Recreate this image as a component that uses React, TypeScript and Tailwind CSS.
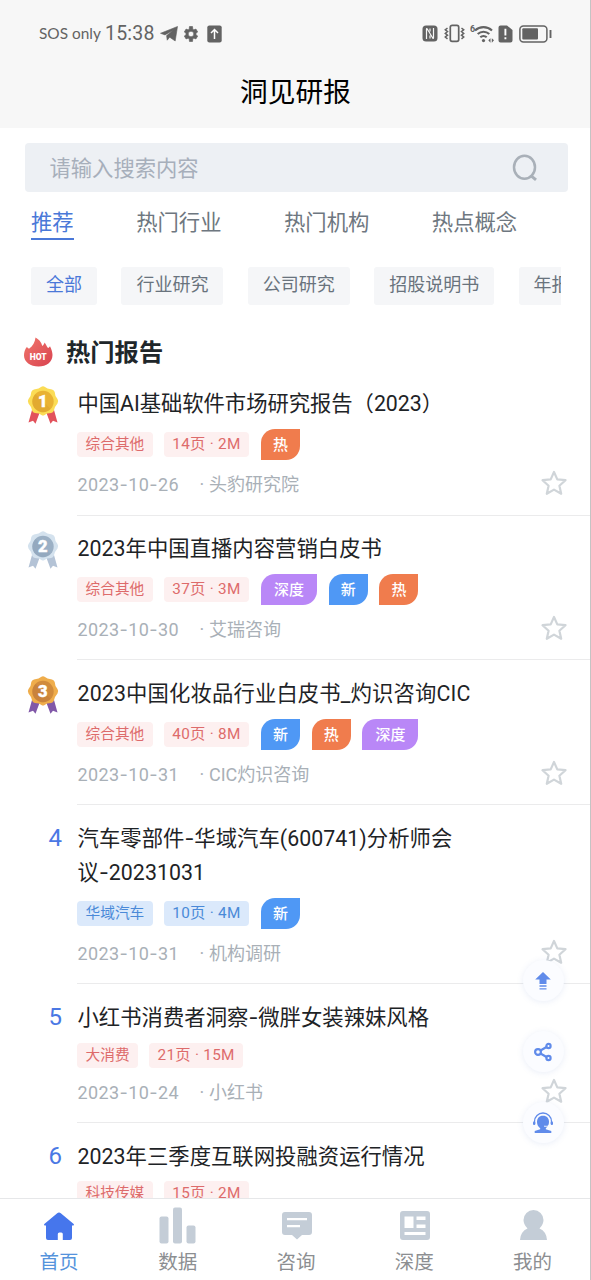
import React from "react";

type Tone = "red" | "blue";
type Leaf = "热" | "新" | "深度";
type Report = {
  title: string[];
  tracking: string;
  tags: [string, string];
  tone: Tone;
  leaves: Leaf[];
  date: string;
  source: string;
};

const reports: Report[] = [
  { title: ["中国AI基础软件市场研究报告（2023）"], tracking: "tracking-[-0.04px]", tags: ["综合其他", "14页 · 2M"], tone: "red", leaves: ["热"], date: "2023-10-26", source: "头豹研究院" },
  { title: ["2023年中国直播内容营销白皮书"], tracking: "tracking-[0.03px]", tags: ["综合其他", "37页 · 3M"], tone: "red", leaves: ["深度", "新", "热"], date: "2023-10-30", source: "艾瑞咨询" },
  { title: ["2023中国化妆品行业白皮书_灼识咨询CIC"], tracking: "tracking-[0.15px]", tags: ["综合其他", "40页 · 8M"], tone: "red", leaves: ["新", "热", "深度"], date: "2023-10-31", source: "CIC灼识咨询" },
  { title: ["汽车零部件-华域汽车(600741)分析师会", "议-20231031"], tracking: "tracking-[0.05px]", tags: ["华域汽车", "10页 · 4M"], tone: "blue", leaves: ["新"], date: "2023-10-31", source: "机构调研" },
  { title: ["小红书消费者洞察-微胖女装辣妹风格"], tracking: "tracking-[0.03px]", tags: ["大消费", "21页 · 15M"], tone: "red", leaves: [], date: "2023-10-24", source: "小红书" },
  { title: ["2023年三季度互联网投融资运行情况"], tracking: "tracking-[0.03px]", tags: ["科技传媒", "15页 · 2M"], tone: "red", leaves: [], date: "2023-10-24", source: "投中研究院" },
];

const leafStyle: Record<Leaf, string> = {
  热: "w-[39px] bg-[#f07c4d]",
  新: "w-[39px] bg-[#4f98f5]",
  深度: "w-[56px] bg-[#b987f7]",
};

/* Hyphens take a wider glyph than the digits' own font has. */
function Dashed({ text }: { text: string }) {
  const parts = text.split("-");
  return (
    <>
      {parts.map((p, i) => (
        <React.Fragment key={i}>
          {i > 0 && <span className="font-['Inter'] leading-none">-</span>}
          {p}
        </React.Fragment>
      ))}
    </>
  );
}

function StatusBar() {
  return (
    <div className="flex h-[67px] items-center justify-between pl-[39px] pr-[37px] text-[#636363]">
      <div className="flex items-center">
        <span className="w-[66px] whitespace-nowrap font-['Lato'] text-[15.400px]">SOS only</span>
        <span className="w-[55px] whitespace-nowrap text-[19.500px] tracking-[0.200px]">15:38</span>
        <svg width="18" height="16" viewBox="0 0 18 16" className="block">
          <path d="M0.500 7.300 17.500.5 15.200 15 9.700 11.200 7.200 14.200 6.600 9.600 13.200 4.200 5 8.900Z" fill="currentColor" stroke="currentColor" strokeWidth="0.600" />
        </svg>
        <svg width="16" height="16" viewBox="0 0 24 24" className="ml-[5px]" fill="currentColor">
          <path fillRule="evenodd" d="M19.400 13a7.800 7.800 0 0 0 0-2l2.600-2-2.600-4.400-3 1.200a8 8 0 0 0-1.700-1L14.300.8H9.700L9.300 4.800a8 8 0 0 0-1.700 1l-3-1.200L2 9l2.600 2a7.800 7.800 0 0 0 0 2L2 15l2.600 4.400 3-1.200a8 8 0 0 0 1.700 1l.4 4h4.600l.4-4a8 8 0 0 0 1.700-1l3 1.200L22 15ZM12 16.200a4.200 4.200 0 1 1 0-8.400 4.200 4.200 0 0 1 0 8.400Z" stroke="currentColor" strokeWidth="1" />
        </svg>
        <svg width="15" height="18" viewBox="0 0 15 18" className="ml-2">
          <rect x="0.300" y="0.500" width="14.400" height="17" rx="2" fill="currentColor" />
          <path d="M7.500 14V4.500M4 8l3.500-3.500L11 8" fill="none" stroke="#fff" strokeWidth="1.500" />
        </svg>
      </div>
      <div className="flex items-center">
        <svg width="16" height="17" viewBox="0 0 16 17" className="block">
          <rect x="0.500" y="0.500" width="15" height="16" rx="3.500" fill="currentColor" />
          <path d="M4.500 14V4.200q0-1 .8-.2l5.400 9q.8.800.8-.2V3M8 6.500V3.500M8 10.500v3" fill="none" stroke="#f7f7f7" strokeWidth="1.200" />
        </svg>
        <svg width="21" height="19" viewBox="0 0 21 19" className="ml-[6px]" fill="none" stroke="currentColor">
          <rect x="6.300" y="1.300" width="8.400" height="16" rx="1.800" strokeWidth="1.700" />
          <path d="M3.500 4 1.300 5.800 3.500 7.600 1.300 9.400 3.500 11.200 1.300 13 3.500 14.800M17.500 4l2.200 1.800-2.200 1.800 2.200 1.800-2.200 1.800 2.200 1.800-2.200 1.800" strokeWidth="1.500" />
        </svg>
        <svg width="24" height="20" viewBox="0 0 24 20" className="ml-[5px]">
          <text x="0" y="8" fontSize="9" fontWeight="700" fill="currentColor">6</text>
          <g fill="none" stroke="currentColor" strokeWidth="2.100">
            <path d="M5 6.500a12.500 12.500 0 0 1 17 0" />
            <path d="M7.700 10a8.500 8.500 0 0 1 11.600 0" />
            <path d="M10.300 13.300a4.700 4.700 0 0 1 6.400 0" />
          </g>
          <circle cx="13.500" cy="16.600" r="1.600" fill="currentColor" />
          <path d="M18.300 16.300l2.200-2v4.500zM24 16.300l-2.200-2v4.500z" fill="currentColor" />
        </svg>
        <svg width="15" height="18" viewBox="0 0 15 18" className="ml-[4px]">
          <path d="M2.500.5H9l5.500 4.500v10.500a2 2 0 0 1-2 2h-10a2 2 0 0 1-2-2v-13a2 2 0 0 1 2-2Z" fill="currentColor" />
          <path d="M7.400 3.800v6.700M7.400 12.300v2" stroke="#fff" strokeWidth="1.900" />
        </svg>
        <svg width="34" height="18" viewBox="0 0 34 18" className="ml-[6px]">
          <rect x="0.900" y="0.900" width="27" height="16" rx="3.500" fill="none" stroke="currentColor" strokeWidth="1.500" />
          <rect x="3.300" y="3.300" width="15.700" height="11.200" rx="1" fill="currentColor" />
          <path d="M31.500 5v8" stroke="currentColor" strokeWidth="1.900" />
        </svg>
      </div>
    </div>
  );
}

const medalColors = [
  { ribbon: "#e2525c", rim: "#fbdc55", face: "#e9b233", inner: "#d99f2c" },
  { ribbon: "#b4c3d6", rim: "#d4e2ee", face: "#9bb0c5", inner: "#8ba1b8" },
  { ribbon: "#8158a8", rim: "#efad4b", face: "#d18b3c", inner: "#bf7a3c" },
];

function Medal({ rank }: { rank: number }) {
  const c = medalColors[rank - 1];
  return (
    <svg width="34" height="40" viewBox="0 0 34 40" className="block">
      <path d="M6 25 2.500 37.500l4.500-1.800 2.500 3L13.500 28ZM28 25l3.500 12.500-4.500-1.800-2.500 3L20.500 28Z" fill={c.ribbon} />
      <path d="M17 1.200q1 0 2 .7l2.500 1.600 4.500 1q2.200.5 2.700 2.600l.8 4 2 3q1.400 2.200 0 4.400l-2.500 3.600-1.200 3.600q-.6 2-2.700 2.400l-4 .4-2.500 1.400q-1.600 1-3.200 0L12.900 28.500l-4-.4q-2.100-.4-2.700-2.400L5 22.100 2.500 18.500q-1.400-2.200 0-4.400l2-3 .8-4q.5-2.100 2.700-2.600l4.500-1L15 1.900q1-.7 2-.7Z" fill={c.rim} />
      <circle cx="17" cy="16.500" r="10.700" fill={c.face} />
      <path d="M9.500 9a10.700 10.700 0 1 0 15.200 15.100Z" fill={c.inner} opacity="0.450" />
      <text x="16.700" y="22" textAnchor="middle" fontFamily="Roboto" fontSize="16.500" fontWeight="900" fill="#fff" stroke="#fff" strokeWidth="0.400">{rank}</text>
    </svg>
  );
}

function Star() {
  return (
    <svg width="28" height="28" viewBox="0 0 28 28" fill="none" stroke="#d0d5d9" strokeWidth="2.200" strokeLinejoin="round" className="mb-[2.500px]">
      <path d="m14 3 3.300 7.400 8.200.8-6.100 5.500 1.800 8.100-7.200-4.200-7.200 4.200 1.800-8.100-6.100-5.500 8.200-.8Z" />
    </svg>
  );
}

function ReportRow({ report, rank }: { report: Report; rank: number }) {
  const tone = report.tone === "red" ? "bg-[#fdf0f0] text-[#dd6b6b]" : "bg-[#dbe9fb] text-[#4a89d8]";
  const dateGap = report.leaves.length > 0 ? "mt-[10.500px]" : "mt-[10px]";
  return (
    <article className="flex">
      <div className="w-[77px] shrink-0">
        {rank <= 3 ? (
          <div className="pl-[25.500px] pt-[14.500px]"><Medal rank={rank} /></div>
        ) : (
          <div className="pr-[15px] pt-[16px] text-right text-[24px] leading-[34px] text-[#4a78e4]">{rank}</div>
        )}
      </div>
      <div className="min-w-0 grow border-b border-[#ebebec] pb-[16px] pt-[16.500px]">
        <h3 className={`${report.tracking} pl-[0.500px] text-[21.330px] leading-[34.300px] text-[#1e2326]`}>
          {report.title.map((line) => (
            <span key={line} className="block whitespace-nowrap"><Dashed text={line} /></span>
          ))}
        </h3>
        <div className="mt-[7.500px] flex items-center whitespace-nowrap">
          <span className={`${tone} mr-[11px] h-[25.500px] rounded-[4px] px-[8.500px] text-[14.700px] leading-[25.500px]`}>{report.tags[0]}</span>
          <span className={`${tone} mr-[12px] h-[25.500px] rounded-[4px] px-[8.500px] text-[15.300px] leading-[25.500px] tracking-[0.280px]`}>{report.tags[1]}</span>
          {report.leaves.map((leaf) => (
            <span key={leaf} className={`${leafStyle[leaf]} mr-[11.700px] h-[31px] rounded-br-[14px] rounded-tl-[14px] text-center text-[15px] font-medium leading-[33px] text-white`}>{leaf}</span>
          ))}
        </div>
        <div className={`${dateGap} flex h-7 items-center justify-between pr-[22.500px]`}>
          <p className="flex whitespace-nowrap pl-[0.500px] text-[18px] text-[#a9b0b7]">
            <span className="w-[122px] tracking-[0.400px]"><Dashed text={report.date} /></span>
            <span className="w-[9.500px]">·</span>
            <span>{report.source}</span>
          </p>
          <Star />
        </div>
      </div>
    </article>
  );
}

function FloatButton({ children }: { children: React.ReactNode }) {
  return (
    <button className="flex size-[41px] items-center justify-center rounded-full bg-[#fbfcff] text-[#608bea] shadow-[0_1px_6px_rgba(90,125,200,0.13)]">
      {children}
    </button>
  );
}

const navItems = [
  { label: "首页", icon: <path d="M18 4.500q1 0 1.800.7L32.700 16q.8 1-.4 1.500H31V30q0 2-2 2h-7.200v-6q0-1.500-1.500-1.500h-2q-1.500 0-1.500 1.500v6H7q-2 0-2-2V17.500H3.700q-1.200-.5-.4-1.500L16.200 5.200q.8-.7 1.800-.7Z" /> },
  { label: "数据", icon: <><rect x="0.500" y="8.500" width="9" height="27" rx="2" /><rect x="14" y="-0.500" width="9" height="36" rx="2" /><rect x="27.500" y="17.500" width="9" height="18" rx="2" /></> },
  { label: "咨询", icon: <path fillRule="evenodd" d="M8 4h24q3 0 3 3v17q0 3-3 3h-7l-5 4.500-5-4.500H8q-3 0-3-3V7q0-3 3-3Zm2 6v2.200h20V10Zm0 7v2.200h13V17Z" /> },
  { label: "深度", icon: <path fillRule="evenodd" d="M7 3h24q3 0 3 3v23q0 3-3 3H7q-3 0-3-3V6q0-3 3-3Zm1.500 5.500V20h9V8.500Zm12 0V12h9V8.500Zm0 8V20h9v-3.500ZM8.500 24v3h21v-3Z" /> },
  { label: "我的", icon: <path d="M19.500 2a10 10 0 0 1 10 10q0 4.500-4 8.500 7 3 7.500 11.500H6Q6.500 23.500 13.500 20.500q-4-4-4-8.500a10 10 0 0 1 10-10Z" /> },
];

export default function App() {
  return (
    <div className="relative flex h-[1280px] w-[591px] flex-col overflow-hidden border-r border-[#c4c4c4] bg-white font-['Roboto','Noto_Sans_CJK_SC',sans-serif]">
      <header className="h-[128px] shrink-0 bg-[#f7f7f7]">
        <StatusBar />
        <h1 className="pl-[1px] text-center text-[27.700px] leading-[51px] text-black">洞见研报</h1>
      </header>

      <div className="mx-[24.500px] mt-[15px] flex h-[49px] w-[543px] shrink-0 items-center justify-between rounded-[4px] bg-[#edf0f4] pl-[25px] pr-[28px]">
        <span className="pt-[2px] text-[21.300px] text-[#a7afbb]">请输入搜索内容</span>
        <svg width="30" height="30" viewBox="0 0 30 30" fill="none" stroke="#a9b0b8" strokeWidth="2.500">
          <ellipse cx="14.500" cy="14.300" rx="10.500" ry="11.500" />
          <path d="m20.500 22.300 5.500 4.500" strokeWidth="3" />
        </svg>
      </div>

      <nav className="ml-[31px] mt-3 flex h-[36px] shrink-0 gap-[62.500px] whitespace-nowrap text-[21.330px] leading-[38px] text-[#6e7780]">
        <span className="h-[36px] border-b-2 border-[#4a78d8] text-[#4a78d8]">推荐</span>
        <span>热门行业</span>
        <span>热门机构</span>
        <span>热点概念</span>
      </nav>

      <div className="ml-[31px] mt-[27px] flex h-[38px] w-[530px] shrink-0 gap-[24.400px] overflow-hidden whitespace-nowrap text-[18px] leading-[36px] text-[#69737d]">
        <span className="shrink-0 rounded-[3px] bg-[#f5f6f8] px-[15px] text-[#4a78d8]">全部</span>
        <span className="shrink-0 rounded-[3px] bg-[#f5f6f8] px-[15px]">行业研究</span>
        <span className="shrink-0 rounded-[3px] bg-[#f5f6f8] px-[15px]">公司研究</span>
        <span className="shrink-0 rounded-[3px] bg-[#f5f6f8] px-[15px]">招股说明书</span>
        <span className="shrink-0 rounded-[3px] bg-[#f5f6f8] px-[15px]">年报</span>
      </div>

      <div className="mt-[29px] flex h-[36px] shrink-0 items-center pl-[23px]">
        <svg width="31" height="32" viewBox="0 0 31 32">
          <defs>
            <linearGradient id="flame" x1="0" y1="0" x2="1" y2="1">
              <stop offset="0" stopColor="#f0766b" />
              <stop offset="1" stopColor="#d94350" />
            </linearGradient>
          </defs>
          <path d="M12.500 1.500c3 1.500 6 4.500 6.800 8.500 1.300-1 2-2.300 2.200-3.500 1.500 1.500 1.800 3.500 3.500 5.500 1-.3 1.500-1 2-1.800 1.500 3 2.500 6 2.500 8.800 0 7-6 11.500-14 11.500S1 26 1 19.500c0-3 .8-6 3-8.700.5 1 1 1.500 2 1.900C10 10 12 6 12.500 1.500Z" fill="url(#flame)" />
          <text x="15.300" y="23.500" textAnchor="middle" fontFamily="Roboto" fontSize="8.500" fontWeight="900" fill="#fff">HOT</text>
        </svg>
        <h2 className="ml-[12px] pt-[1px] text-[24.300px] font-bold leading-[38px] text-[#20262a]">热门报告</h2>
      </div>

      <main className="min-h-0 grow overflow-hidden pt-[0.900px]">
        {reports.map((r, i) => (
          <ReportRow key={r.title[0]} report={r} rank={i + 1} />
        ))}
      </main>

      <div className="absolute left-[522.500px] top-[960px] flex flex-col gap-[30px]">
        <FloatButton>
          <svg width="18" height="20" viewBox="0 0 18 20" fill="currentColor">
            <path d="M9 1 16.800 8.500H12.500V13h-7V8.500H1.200ZM5.500 14.300h7v1.500h-7zM5.500 17.200h7v1.300h-7z" />
          </svg>
        </FloatButton>
        <FloatButton>
          <svg width="20" height="20" viewBox="0 0 20 20" fill="none" stroke="currentColor" strokeWidth="2.200">
            <circle cx="5" cy="10" r="2.900" />
            <circle cx="15.500" cy="4" r="2.100" />
            <circle cx="15.500" cy="16" r="2.100" />
            <path d="m7.500 8.500 6-3.500M7.500 11.500l6 3.500" />
          </svg>
        </FloatButton>
        <FloatButton>
          <svg width="22" height="22" viewBox="0 0 22 22" fill="currentColor">
            <path d="M2.500 12V9.500a8.500 8.500 0 0 1 17 0V12" fill="none" stroke="currentColor" strokeWidth="1.300" />
            <rect x="1" y="9.500" width="2.300" height="3.500" rx="1" />
            <rect x="18.700" y="9.500" width="2.300" height="3.500" rx="1" />
            <path d="M11 3.800c4 0 6 2.700 6 6.300 0 2.900-1.400 5-3.200 6.100v1l5.500 1.900v2H2.700v-2l5.500-1.900v-1C6.400 15.100 5 13 5 10.100 5 6.500 7 3.800 11 3.800Z" />
            <path d="M18 12.500c-1 1.700-2.500 2-6 1.700" fill="none" stroke="#fbfcff" strokeWidth="0.900" />
          </svg>
        </FloatButton>
      </div>

      <nav className="grid h-[82px] w-[591px] shrink-0 grid-cols-5 border-t border-[#e6e7e9] bg-white">
        {navItems.map((item, i) => (
          <div key={item.label} className="flex flex-col items-center pt-[9px]">
            <svg width="36" height="36" viewBox="0 0 36 36" overflow="visible" className={i === 0 ? "fill-[#4676ec]" : "fill-[#c4cdd7]"}>{item.icon}</svg>
            <span className={`${i === 0 ? "text-[#5593dc]" : "pl-[1px] text-[#8c8e91]"} text-[19.500px] leading-[38px]`}>{item.label}</span>
          </div>
        ))}
      </nav>
    </div>
  );
}
